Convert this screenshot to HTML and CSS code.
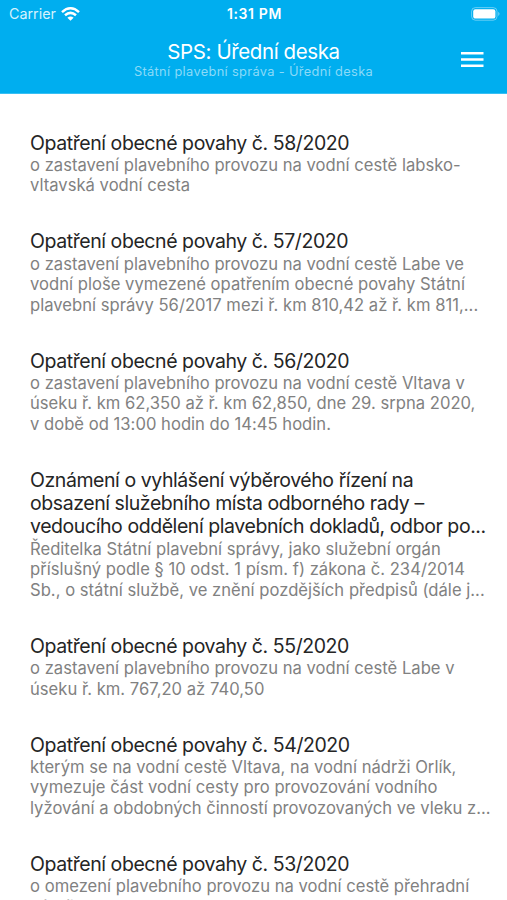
FILE: index.html
```html
<!DOCTYPE html>
<html lang="cs">
<head>
<meta charset="utf-8">
<title>SPS: Úřední deska</title>
<link rel="stylesheet" href="styles.css">
</head>
<body>
<header class="header">
  <div class="status">
    <div class="carrier"><span>Carrier</span>
      <svg class="wifi" width="19" height="14" viewBox="0 0 19 14" fill="none" stroke="#fff" stroke-width="2.5"><path d="M1 5.1Q9.5-2.5 18 5.1M4 8.3Q9.5 3.5 15 8.3"/><path d="M6.4 10.8Q9.5 8.3 12.6 10.8L9.5 13.8Z" fill="#fff" stroke="none"/></svg>
    </div>
    <span class="time">1:31 PM</span>
    <svg class="battery" width="30" height="14" viewBox="0 0 30 14"><rect x=".6" y=".6" width="25.4" height="12.6" rx="3.8" fill="none" stroke="#fff" stroke-opacity=".4"/><rect x="2.2" y="2.3" width="22.2" height="9.3" rx="2.2" fill="#fff"/><path d="M27.3 4.8Q29.7 6.9 27.3 9Z" fill="#fff" fill-opacity=".5"/></svg>
  </div>
  <div class="bar">
    <div class="heading">
      <h1>SPS: Úřední deska</h1>
      <p>Státní plavební správa - Úřední deska</p>
    </div>
    <svg class="menu" width="23" height="16" viewBox="0 0 23 16" fill="#fff"><path d="M0 0h22.5v2.5H0zM0 6.3h22.5v2.5H0zM0 12.6h22.5v2.5H0z"/></svg>
  </div>
</header>
<main class="list">
  <article><h2>Opatření obecné povahy č. 58/2020</h2><p>o zastavení plavebního provozu na vodní cestě labsko-<br>vltavská vodní cesta</p></article>
  <article><h2>Opatření obecné povahy č. 57/2020</h2><p>o zastavení plavebního provozu na vodní cestě Labe ve<br>vodní ploše vymezené opatřením obecné povahy Státní<br>plavební správy 56/2017 mezi ř. km 810,42 až ř. km 811,...</p></article>
  <article><h2>Opatření obecné povahy č. 56/2020</h2><p>o zastavení plavebního provozu na vodní cestě Vltava v<br>úseku ř. km 62,350 až ř. km 62,850, dne 29. srpna 2020,<br>v době od 13:00 hodin do 14:45 hodin.</p></article>
  <article><h2>Oznámení o vyhlášení výběrového řízení na<br>obsazení služebního místa odborného rady –<br>vedoucího oddělení plavebních dokladů, odbor po...</h2><p>Ředitelka Státní plavební správy, jako služební orgán<br>příslušný podle § 10 odst. 1 písm. f) zákona č. 234/2014<br>Sb., o státní službě, ve znění pozdějších předpisů (dále j...</p></article>
  <article><h2>Opatření obecné povahy č. 55/2020</h2><p>o zastavení plavebního provozu na vodní cestě Labe v<br>úseku ř. km. 767,20 až 740,50</p></article>
  <article><h2>Opatření obecné povahy č. 54/2020</h2><p>kterým se na vodní cestě Vltava, na vodní nádrži Orlík,<br>vymezuje část vodní cesty pro provozování vodního<br>lyžování a obdobných činností provozovaných ve vleku z...</p></article>
  <article><h2>Opatření obecné povahy č. 53/2020</h2><p>o omezení plavebního provozu na vodní cestě přehradní<br>nádrže</p></article>
</main>
</body>
</html>
```

FILE: styles.css
```css
* { box-sizing: border-box; margin: 0; }
body { height: 900px; overflow: hidden; background: #fff; font-family: Inter, "Liberation Sans", sans-serif; }
.header { height: 94px; background: #00aeef; color: #fff; border-bottom: 1px solid #38bff3; }
.status { height: 27px; padding: 0 6px 0 9px; display: grid; grid-template-columns: 1fr auto 1fr; align-items: center; }
.carrier { display: flex; align-items: center; gap: 5px; font-size: 14.3px; color: #d5f2fd; }
.time { font-size: 14px; font-weight: 600; letter-spacing: .65px; margin-left: -1px; }
.battery { justify-self: end; }
.bar { height: 66px; padding: 0 23px 0 46px; display: flex; align-items: center; }
.heading { flex: 1; text-align: center; white-space: nowrap; }
.heading h1 { font-size: 20.5px; line-height: 24px; font-weight: 400; letter-spacing: -.4px; }
.heading p { font-size: 12.8px; line-height: 16px; letter-spacing: .35px; color: #8bdaf8; }
.list { height: 806px; overflow: hidden; padding: 37.5px 0 0 30px; white-space: nowrap; }
.list article { padding-bottom: 34.5px; }
.list h2 { font-size: 19.5px; line-height: 23.3px; font-weight: 400; letter-spacing: -.43px; color: #252525; }
.list p { font-size: 16.6px; line-height: 20.5px; letter-spacing: .02px; color: #818181; }
```
